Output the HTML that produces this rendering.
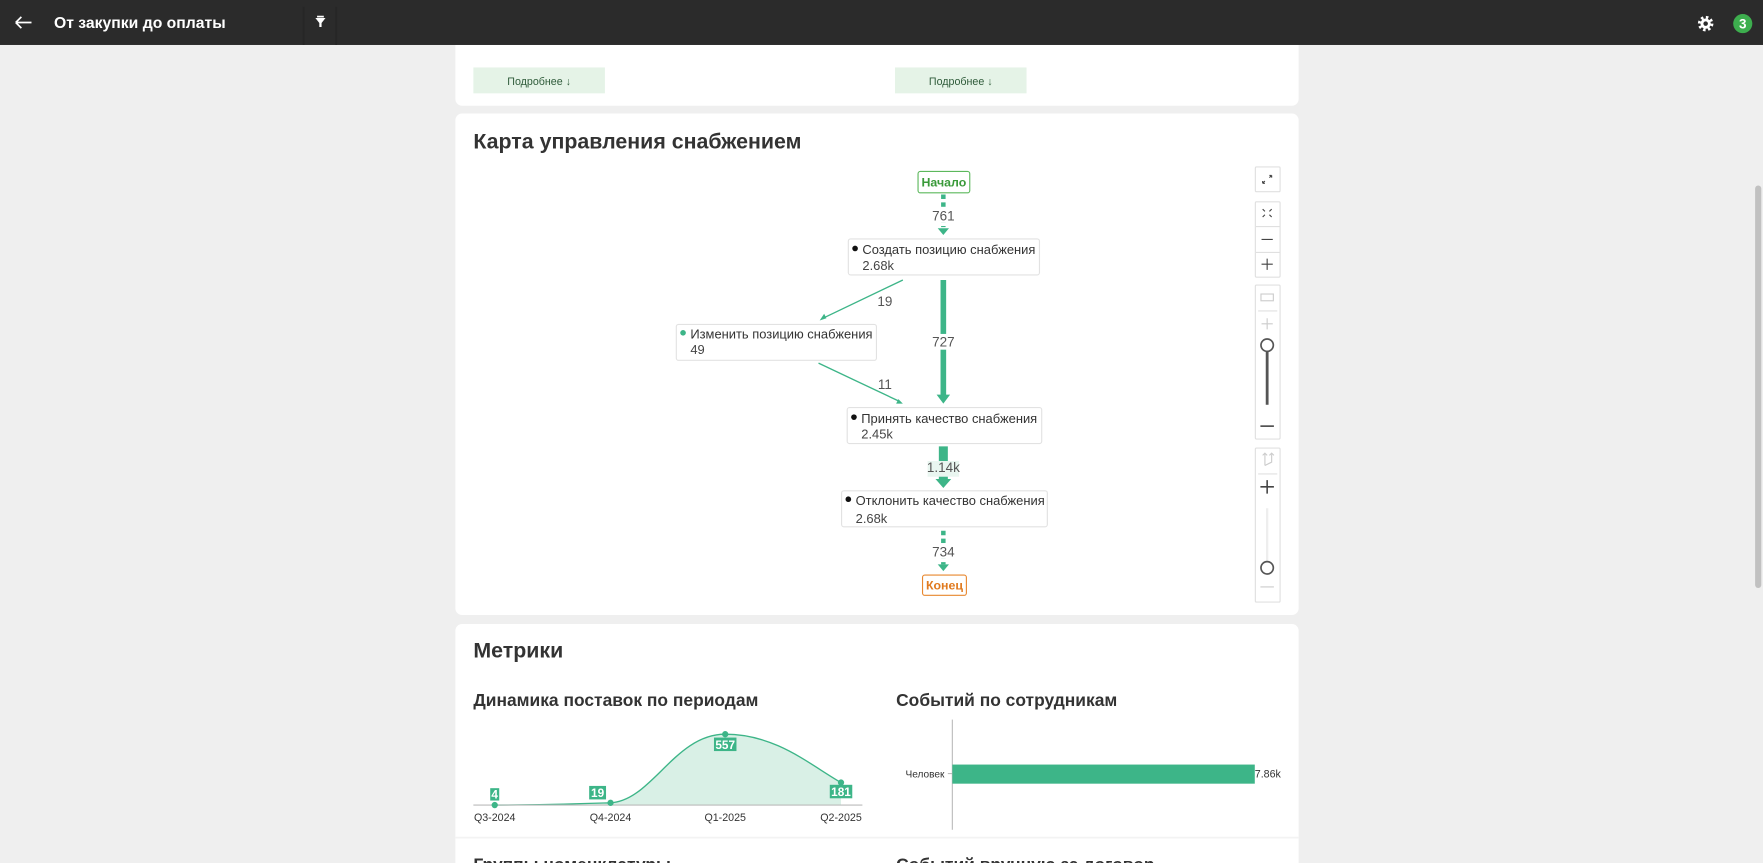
<!DOCTYPE html>
<html><head><meta charset="utf-8"><style>
html,body{margin:0;padding:0;width:1763px;height:863px;overflow:hidden;background:#efefef}
svg{display:block}
text{font-family:"Liberation Sans","Noto Sans CJK SC",sans-serif}
</style></head><body>
<svg width="1763" height="863" viewBox="0 0 1568 767.55" xmlns="http://www.w3.org/2000/svg">
<rect width="1568" height="768" fill="#efefef"/>
<!-- cards -->
<rect x="405" y="20" width="750" height="74" rx="6" fill="#fff"/>
<rect x="405" y="101" width="750" height="446" rx="6" fill="#fff"/>
<rect x="405" y="555" width="750" height="230" rx="6" fill="#fff"/>
<line x1="405" y1="745" x2="1155" y2="745" stroke="#f3f3f3" stroke-width="1.5"/>
<!-- header -->
<rect width="1568" height="40" fill="#2b2b2b"/>
<line x1="270" y1="6" x2="270" y2="40" stroke="#262626" stroke-width="1.5"/>
<line x1="299" y1="6" x2="299" y2="40" stroke="#262626" stroke-width="1.5"/>
<path d="M14 20h14M14 20l5-5M14 20l5 5" stroke="#fff" stroke-width="1.5" fill="none"/>
<text x="48" y="25" fill="#fff" font-size="14" font-weight="bold">От закупки до оплаты</text>
<path d="M280.5 16h9l-3.5 4.5v3.5h-2v-3.5z" fill="#fff"/>
<rect x="282" y="14" width="6" height="1.5" fill="#fff"/>
<g transform="translate(1517,21)">
<circle r="5.6" fill="none" stroke="#fff" stroke-width="2.6" stroke-dasharray="2.2 2.2"/>
<circle r="4.6" fill="#fff"/><circle r="2" fill="#2b2b2b"/></g>
<circle cx="1550" cy="21" r="8.5" fill="#3dae4e"/>
<text x="1550" y="25.5" fill="#fff" font-size="12" font-weight="bold" text-anchor="middle">3</text>
<!-- buttons -->
<rect x="421" y="60" width="117" height="23" fill="#e5f3e7"/>
<text x="479.5" y="75.5" fill="#2f5b3a" font-size="9.5" text-anchor="middle">Подробнее ↓</text>
<rect x="796" y="60" width="117" height="23" fill="#e5f3e7"/>
<text x="854.5" y="75.5" fill="#2f5b3a" font-size="9.5" text-anchor="middle">Подробнее ↓</text>
<!-- map title -->
<text x="421" y="132" fill="#333" font-size="19" font-weight="bold">Карта управления снабжением</text>
<!-- edges -->
<g fill="#3db588" stroke="#3db588">
<line x1="839" y1="173" x2="839" y2="202" stroke-width="4" stroke-dasharray="4 3"/>
<path d="M834 203h10l-5 6z" stroke="none"/>
<line x1="839" y1="249" x2="839" y2="352" stroke-width="5"/>
<path d="M833 351h12l-6 8z" stroke="none"/>
<line x1="839" y1="397" x2="839" y2="428" stroke-width="8"/>
<path d="M832 426h14l-7 8z" stroke="none"/>
<line x1="839" y1="472" x2="839" y2="502" stroke-width="4" stroke-dasharray="4 3"/>
<path d="M834 502h10l-5 6z" stroke="none"/>
<line x1="803" y1="249" x2="732" y2="283" stroke-width="1.2"/>
<path d="M729 285l4-6 2 4z" stroke="none"/>
<line x1="728" y1="323" x2="800" y2="357" stroke-width="1.2"/>
<path d="M803 359l-6 0 2-4z" stroke="none"/>
</g>
<g font-size="12" fill="#555" text-anchor="middle">
<rect x="828" y="184" width="22" height="14" fill="#fff"/><text x="839" y="196">761</text>
<rect x="828" y="297" width="22" height="14" fill="#fff"/><text x="839" y="308">727</text>
<rect x="825" y="410" width="28" height="14" fill="#e9f6f0"/><text x="839" y="420">1.14k</text>
<rect x="828" y="483" width="22" height="14" fill="#fff"/><text x="839" y="495">734</text>
<text x="787" y="272">19</text>
<text x="787" y="346">11</text>
</g>
<!-- nodes -->
<rect x="816.5" y="152.5" width="46" height="19" rx="2" fill="#fff" stroke="#5cb85c"/>
<text x="839.5" y="166" font-size="11" font-weight="bold" fill="#3a9a3a" text-anchor="middle">Начало</text>
<rect x="820.5" y="511.5" width="39" height="18" rx="2" fill="#fff" stroke="#e8872e"/>
<text x="840" y="524.5" font-size="11" font-weight="bold" fill="#e07a1f" text-anchor="middle">Конец</text>
<g font-size="11.5" fill="#333">
<rect x="754.5" y="212.5" width="170" height="32" rx="2" fill="#fff" stroke="#e2e2e2"/>
<circle cx="760.5" cy="221" r="2.5" fill="#111"/><text x="767" y="226">Создать позицию снабжения</text><text x="767" y="240" fill="#444">2.68k</text>
<rect x="601.5" y="288.5" width="178" height="32" rx="2" fill="#fff" stroke="#e2e2e2"/>
<circle cx="607.5" cy="296" r="2.5" fill="#3db588"/><text x="614" y="301">Изменить позицию снабжения</text><text x="614" y="315" fill="#444">49</text>
<rect x="753.5" y="362.5" width="173" height="32" rx="2" fill="#fff" stroke="#e2e2e2"/>
<circle cx="759.5" cy="371" r="2.5" fill="#111"/><text x="766" y="376">Принять качество снабжения</text><text x="766" y="390" fill="#444">2.45k</text>
<rect x="748.5" y="436.5" width="183" height="32" rx="2" fill="#fff" stroke="#e2e2e2"/>
<circle cx="754.5" cy="444" r="2.5" fill="#111"/><text x="761" y="449">Отклонить качество снабжения</text><text x="761" y="465" fill="#444">2.68k</text>
</g>
<!-- controls -->
<g fill="#fff" stroke="#e0e0e0">
<rect x="1116.5" y="148.5" width="22" height="22" rx="1"/>
<rect x="1116.5" y="179.5" width="22" height="67" rx="1"/>
<rect x="1116.5" y="253.5" width="22" height="137" rx="1"/>
<rect x="1116.5" y="398.5" width="22" height="137" rx="1"/>
<line x1="1117" y1="201.5" x2="1138" y2="201.5"/><line x1="1117" y1="224.5" x2="1138" y2="224.5"/>
<line x1="1119" y1="276.5" x2="1136" y2="276.5"/><line x1="1119" y1="421.5" x2="1136" y2="421.5"/>
</g>
<g stroke="#444" stroke-width="1" fill="none">
<path d="M1123 163l2-2M1123 163v-2M1123 163h2M1131 156l-2 2M1131 156v2M1131 156h-2"/>
<path d="M1123 186l2 2M1131 186l-2 2M1123 193l2-2M1131 193l-2-2"/>
<path d="M1122 213h10M1122 235h10M1127 230v10"/>
<rect x="1121.5" y="261.5" width="11" height="6" stroke="#ccc"/>
<path d="M1122 288h10M1127 283v10" stroke="#ccc"/>
<line x1="1127" y1="312" x2="1127" y2="360" stroke="#555" stroke-width="2.5"/>
<circle cx="1127" cy="307" r="5.5" fill="#fff" stroke="#555" stroke-width="1.5"/>
<path d="M1121 379h12" stroke-width="1.4"/>
<path d="M1125 403v11M1125 414l6-3v-7M1129 405l2-2 2 2M1123 405l2-2 2 2" stroke="#ccc"/>
<path d="M1121 433h12M1127 427v12" stroke-width="1.4"/>
<line x1="1127" y1="452" x2="1127" y2="500" stroke="#eee" stroke-width="2"/>
<circle cx="1127" cy="505" r="5.5" fill="#fff" stroke="#555" stroke-width="1.5"/>
<path d="M1121 522h12" stroke="#ccc"/>
</g>
<!-- metrics -->
<text x="421" y="585" fill="#333" font-size="19" font-weight="bold">Метрики</text>
<text x="421" y="628" fill="#333" font-size="15.5" font-weight="bold">Динамика поставок по периодам</text>
<text x="797" y="628" fill="#333" font-size="15.5" font-weight="bold">Событий по сотрудникам</text>
<path d="M440 716 C480 716 510 715 543 714 C580 712 600 653 645 653 C690 653 720 680 748 696 L748 716 Z" fill="#d9f0e6"/>
<path d="M440 716 C480 716 510 715 543 714 C580 712 600 653 645 653 C690 653 720 680 748 696" fill="none" stroke="#3db588" stroke-width="1.2"/>
<line x1="421" y1="716" x2="767" y2="716" stroke="#bbb"/>
<g fill="#3db588"><circle cx="440" cy="716" r="2.8"/><circle cx="543" cy="714" r="2.8"/><circle cx="645" cy="653" r="2.8"/><circle cx="748" cy="696" r="2.8"/>
<rect x="436" y="701" width="8" height="11"/><rect x="524" y="699" width="15" height="12"/><rect x="635" y="656" width="20" height="12"/><rect x="738" y="698" width="20" height="12"/></g>
<g fill="#fff" font-size="10.5" font-weight="bold" text-anchor="middle"><text x="440" y="710">4</text><text x="531.5" y="709">19</text><text x="645" y="666">557</text><text x="748" y="708">181</text></g>
<g fill="#333" font-size="9.5" text-anchor="middle"><text x="440" y="730">Q3-2024</text><text x="543" y="730">Q4-2024</text><text x="645" y="730">Q1-2025</text><text x="748" y="730">Q2-2025</text></g>
<line x1="847" y1="640" x2="847" y2="738" stroke="#bbb"/>
<line x1="843" y1="688" x2="847" y2="688" stroke="#bbb"/>
<rect x="847" y="680" width="269" height="17" fill="#3db588"/>
<text x="840" y="691.5" fill="#333" font-size="9" text-anchor="end">Человек</text>
<text x="1116" y="691.5" fill="#333" font-size="9.5">7.86k</text>
<text x="421" y="774" fill="#333" font-size="15.5" font-weight="bold">Группы номенклатуры</text>
<text x="797" y="774" fill="#333" font-size="15.5" font-weight="bold">Событий вручную за договор</text>
<!-- scrollbar -->
<rect x="1561" y="165" width="5.5" height="358" rx="2.75" fill="#c1c1c1"/>
</svg>
</body></html>
